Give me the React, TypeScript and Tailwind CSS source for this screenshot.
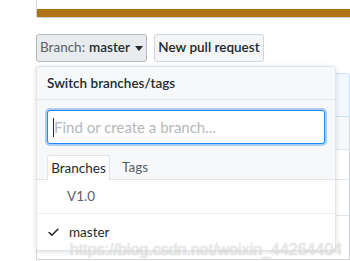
import { Check } from 'lucide-react'

export default function App() {
  return (
    <div className="relative h-[261px] w-[350px] overflow-hidden bg-white text-[13.5px] text-[#24292e] [font-family:Lato,sans-serif]">
      {/* language bar box */}
      <div className="ml-[36px] flex h-[18px] flex-col justify-end rounded-bl-[3px] border-b border-l border-[#d1d5da]">
        <div className="h-[8px] bg-[#b07219]" />
      </div>

      {/* buttons */}
      <div className="mt-[16px] ml-[36px] flex gap-[7px] whitespace-nowrap">
        <button className="flex h-[28px] w-[111px] items-center justify-center gap-[4px] rounded-[3px] border border-[#b4b8bd] bg-[#e9ecef] leading-none">
          <span className="text-[#586069]">Branch:</span>
          <span className="font-semibold">master</span>
          <svg width="8" height="5" viewBox="0 0 8 5" className="ml-[1px]">
            <path d="M0 0h8L4 5z" fill="#24292e" />
          </svg>
        </button>
        <button className="h-[28px] w-[110px] rounded-[3px] border border-[#d1d5da] bg-[#f3f5f7] font-semibold leading-none">
          New pull request
        </button>
      </div>

      {/* content behind the menu */}
      <div className="mt-[11px] ml-[36px] h-[44px] rounded-t-[3px] border border-[#c8e1ff] bg-[#f1f8ff]" />
      <div className="ml-[36px] border-x border-[#d1d5da]">
        <div className="h-[33px] border-b border-[#e1e4e8] bg-[#f6f8fa]" />
        <div className="h-[30px] border-b border-[#e1e4e8]" />
        <div className="h-[36px] border-b border-[#e1e4e8]" />
        <div className="h-[44px] border-b border-[#d1d5da]" />
      </div>

      {/* branch select menu */}
      <div className="absolute top-[66px] left-[36px] w-[300px] overflow-hidden rounded-[3px] border border-[#e1e4e8] bg-white shadow-[0_1px_5px_rgba(27,31,35,0.15)]">
        <div className="flex h-[33px] items-center border-b border-[#e1e4e8] bg-[#f6f8fa] px-[10px] font-semibold">
          Switch branches/tags
        </div>
        <div className="bg-[#f6f8fa] px-[10px] pt-[10px]">
          <div className="flex h-[34px] items-center rounded-[3px] border border-[#2188ff] bg-white px-[5px] text-[15px] shadow-[0_0_0_2px_rgba(3,102,214,0.3)]">
            <span className="h-[19px] w-px bg-[#24292e]" />
            <span className="text-[#b5b9be]">Find or create a branch...</span>
          </div>
          <div className="mt-[11px] flex items-end">
            <div className="-mb-px flex h-[25px] w-[63px] items-center justify-center rounded-t-[3px] border border-b-0 border-[#e1e4e8] bg-white">
              Branches
            </div>
            <div className="flex h-[24px] w-[50px] items-center justify-center text-[#586069]">Tags</div>
          </div>
        </div>
        <div className="border-t border-[#e1e4e8]">
          <div className="flex h-[34px] items-center border-b border-[#eaecef] pl-[30px] text-[#586069]">V1.0</div>
          <div className="flex h-[36px] items-center gap-[9px] pl-[10px]">
            <Check size={13} strokeWidth={3} className="text-[#24292e]" />
            <span>master</span>
          </div>
        </div>
      </div>

      {/* watermark */}
      <div className="pointer-events-none absolute top-[241px] left-[70px] whitespace-nowrap text-[16px] leading-[18px] text-white/70 [font-family:'Liberation_Sans',sans-serif] [text-shadow:0_0_1px_rgba(0,0,0,0.3)]">
        https://blog.csdn.net/weixin_44264404
      </div>
    </div>
  )
}
